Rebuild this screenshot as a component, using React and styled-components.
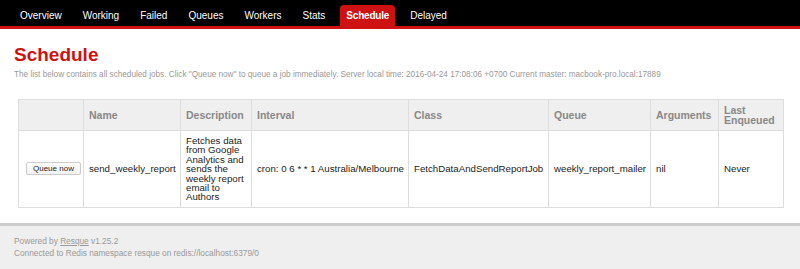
import styled, { createGlobalStyle } from "styled-components";

const GlobalStyle = createGlobalStyle`
  html, body {
    margin: 0;
    padding: 0;
    background: #fff;
    font-family: "Liberation Sans", Arial, Helvetica, sans-serif;
  }
`;

const Header = styled.div`
  background: #000;
  border-bottom: 3px solid #ce1212;
  padding: 5px 0 0 14px;
`;

const Nav = styled.ul`
  display: flex;
  list-style: none;
  margin: 0;
  padding: 0;
`;

const NavItem = styled.li`
  display: flex;
  align-items: center;
  height: 21px;
  padding: 0 6px;
  margin-right: 9px;
  border-radius: 4px 4px 0 0;
  font-size: 10px;
  color: #fff;
  background: ${(p) => (p.$current ? "#ce1212" : "transparent")};
  font-weight: ${(p) => (p.$current ? "bold" : "normal")};
  letter-spacing: ${(p) => (p.$current ? "-0.2px" : "0")};
`;

const Main = styled.div`
  padding: 0 13px 15px 14px;
  background: #fff;
`;

const Title = styled.h1`
  margin: 15px 0 4px;
  font-size: 19px;
  font-weight: bold;
  color: #ce1212;
`;

const Intro = styled.p`
  margin: 0 0 19px;
  font-size: 8.2px;
  line-height: 10px;
  color: #999;
`;

const Table = styled.table`
  width: 765px;
  margin: 0 4px;
  border-collapse: collapse;
  table-layout: fixed;
`;

const Th = styled.th`
  background: #efefef;
  color: #888;
  font-size: 10.5px;
  line-height: 10px;
  font-weight: bold;
  text-align: left;
  vertical-align: middle;
  border: 1px solid #ddd;
  padding: 5px 5px;
  height: 20px;
`;

const Td = styled.td`
  color: #222;
  font-size: 9.7px;
  line-height: 9.4px;
  text-align: left;
  vertical-align: middle;
  border: 1px solid #ddd;
  padding: 5px 5px;
  white-space: ${(p) => (p.$wrap ? "normal" : "nowrap")};
`;

const QueueButton = styled.button`
  font-family: "Liberation Sans", Arial, sans-serif;
  font-size: 8px;
  color: #222;
  height: 13px;
  padding: 0 6px;
  margin-left: 2px;
  white-space: nowrap;
  border: 1px solid #ccc;
  border-radius: 2px;
  background: linear-gradient(#fff, #f1f1f1);
`;

const Footer = styled.div`
  background: #efefef;
  border-top: 3px solid #ccc;
  padding: 9px 14px 10px;
  color: #999;
  font-size: 8.3px;
  line-height: 12.5px;

  p {
    margin: 0;
  }

  a {
    color: #999;
  }
`;

const tabs = ["Overview", "Working", "Failed", "Queues", "Workers", "Stats", "Schedule", "Delayed"];

const columns = [
  { label: "", width: 65 },
  { label: "Name", width: 97 },
  { label: "Description", width: 71 },
  { label: "Interval", width: 157 },
  { label: "Class", width: 140 },
  { label: "Queue", width: 102 },
  { label: "Arguments", width: 68 },
  { label: "Last Enqueued", width: 65 },
];

export default function App() {
  return (
    <>
      <GlobalStyle />
      <Header>
        <Nav>
          {tabs.map((t) => (
            <NavItem key={t} $current={t === "Schedule"}>
              {t}
            </NavItem>
          ))}
        </Nav>
      </Header>
      <Main>
        <Title>Schedule</Title>
        <Intro>
          The list below contains all scheduled jobs. Click "Queue now" to queue a job immediately. Server local
          time: 2016-04-24 17:08:06 +0700 Current master: macbook-pro.local:17889
        </Intro>
        <Table>
          <colgroup>
            {columns.map((c, i) => (
              <col key={i} style={{ width: c.width }} />
            ))}
          </colgroup>
          <thead>
            <tr>
              {columns.map((c, i) => (
                <Th key={i}>{c.label}</Th>
              ))}
            </tr>
          </thead>
          <tbody>
            <tr>
              <Td>
                <QueueButton>Queue now</QueueButton>
              </Td>
              <Td>send_weekly_report</Td>
              <Td $wrap>Fetches data from Google Analytics and sends the weekly report email to Authors</Td>
              <Td>cron: 0 6 * * 1 Australia/Melbourne</Td>
              <Td>FetchDataAndSendReportJob</Td>
              <Td>weekly_report_mailer</Td>
              <Td>nil</Td>
              <Td>Never</Td>
            </tr>
          </tbody>
        </Table>
      </Main>
      <Footer>
        <p>
          Powered by <a href="#">Resque</a> v1.25.2
        </p>
        <p>Connected to Redis namespace resque on redis://localhost:6379/0</p>
      </Footer>
    </>
  );
}
